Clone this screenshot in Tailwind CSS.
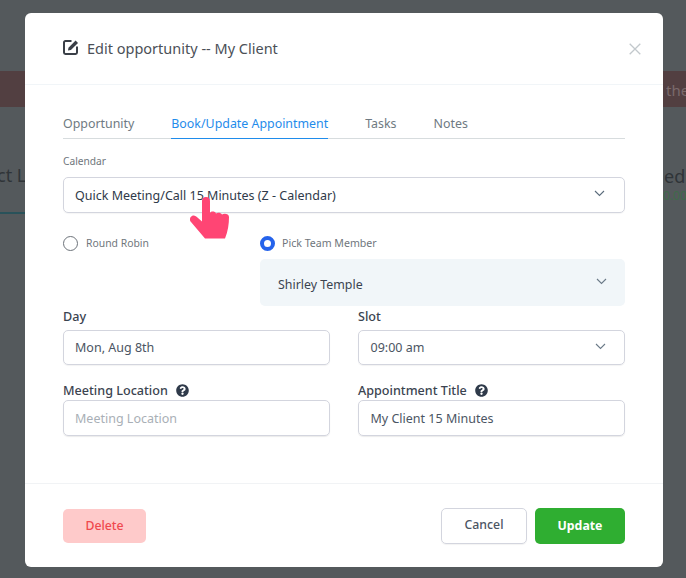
<!DOCTYPE html>
<html>
<head>
<meta charset="utf-8">
<script src="https://cdn.jsdelivr.net/npm/@tailwindcss/browser@4"></script>
</head>
<body class="m-0 p-0">
<div class="relative w-[686px] h-[578px] overflow-hidden bg-[#54595c] font-['Noto_Sans','Open_Sans',sans-serif]">
  <!-- page behind the overlay -->
  <div class="absolute left-0 top-[71px] w-full h-[36px] bg-[#523f41]"></div>
  <div class="absolute left-[-3px] top-[163px] text-[18px] leading-6 text-[#2f3438] whitespace-nowrap">ct L</div>
  <div class="absolute left-0 top-[212px] w-[25px] h-[2px] bg-[#29525a]"></div>
  <div class="absolute left-[663px] top-[80px] text-[15px] leading-5 text-[#7a6a6c] whitespace-nowrap pl-[3px]">the</div>
  <div class="absolute left-[663px] top-[164px] text-[18px] leading-6 text-[#2f3438] pl-px">ed</div>
  <div class="absolute left-[663px] top-[188px] text-[12px] leading-4 text-[#3f6b4a]">0.00</div>

  <!-- modal -->
  <div class="absolute left-[25px] top-[13px] w-[638px] h-[554px] bg-white rounded-[6px] flex flex-col">
    <div class="h-[72px] border-b border-[#f1f5f8] flex items-center justify-between pl-[38px] pr-[22px] shrink-0">
      <div class="flex items-center gap-[8px]">
        <svg class="w-[16px] h-[16px] mt-[-3px] text-[#3a3f47]" viewBox="0 0 16 16" fill="none">
          <path d="M8.500 2H2.400A1.400 1.400 0 0 0 1 3.400v10.200A1.400 1.400 0 0 0 2.400 15h10.200a1.400 1.400 0 0 0 1.400-1.400V7.600" stroke="currentColor" stroke-width="2"/>
          <path d="M5 11.600l.5-2.900L12.600 1.600l2.400 2.400-7.100 7.100z" fill="currentColor"/>
        </svg>
        <span class="text-[14.500px] leading-5 text-[#4b5057] mt-[-2px]">Edit opportunity -- My Client</span>
      </div>
      <svg class="w-[12px] h-[12px] text-[#c2c8cc]" viewBox="0 0 12 12" fill="none"><path d="M.7.7l10.600 10.600M11.300.7L.7 11.300" stroke="currentColor" stroke-width="1.300"/></svg>
    </div>

    <div class="flex-1 px-[38px] pt-[29px]">
      <div class="flex gap-[37px] border-b border-[#d7dcde] h-[25px] text-[12.400px] leading-5 text-[#6f7a82]">
        <span class="h-[25px]">Opportunity</span>
        <span class="h-[25px] text-[#1f8ceb] border-b border-[#1f8ceb]">Book/Update Appointment</span>
        <span class="h-[25px]">Tasks</span>
        <span class="h-[25px]">Notes</span>
      </div>

      <div class="mt-[15px] text-[10.200px] leading-[14px] text-[#6f767c]">Calendar</div>
      <div class="mt-[9px] relative h-[36px] border border-[#d3d5de] rounded-[5px] shadow-[0_1px_1px_rgba(0,0,0,0.04)] pl-[11px] pr-[19px] flex items-center justify-between">
        <span class="text-[12.500px] leading-5 text-[#2f3a4a] mt-[1px]">Quick Meeting/Call 15 Minutes (Z - Calendar)</span>
        <svg class="w-[11px] h-[7px] text-[#5a6b7b] mt-[-3px]" viewBox="0 0 11 7" fill="none"><path d="M1 1l4.500 4.500L10 1" stroke="currentColor" stroke-width="1.100"/></svg>
      </div>

      <div class="flex mt-[12px] h-[81px]">
        <div class="w-[197px] flex items-start gap-[8px] pt-[11px]">
          <span class="block w-[15px] h-[15px] rounded-full border-[1.300px] border-[#6d737a] bg-white"></span>
          <span class="text-[10.400px] leading-[15px] text-[#6f767c]">Round Robin</span>
        </div>
        <div class="flex-1 flex flex-col">
          <div class="flex items-start gap-[7px] pt-[11px] h-[34px] shrink-0">
            <span class="block w-[15px] h-[15px] rounded-full border-[4px] border-[#2563eb] bg-white"></span>
            <span class="text-[10.600px] leading-[15px] text-[#6f767c]">Pick Team Member</span>
          </div>
          <div class="h-[47px] shrink-0 bg-[#f1f6f9] rounded-[5px] pl-[18px] pr-[18px] flex items-center justify-between">
            <span class="text-[12.400px] leading-5 text-[#3b4450] mt-[5px]">Shirley Temple</span>
            <svg class="w-[11px] h-[7px] text-[#6b7a88] mt-[-3px]" viewBox="0 0 11 7" fill="none"><path d="M1 1l4.500 4.500L10 1" stroke="currentColor" stroke-width="1.100"/></svg>
          </div>
        </div>
      </div>

      <div class="grid grid-cols-2 gap-x-[28px]">
        <div>
          <div class="h-[24px] pt-[1px] text-[12.600px] leading-5 font-medium text-[#3b4450]">Day</div>
          <div class="h-[35px] pt-[2px] border border-[#d3d5de] rounded-[5px] shadow-[0_1px_1px_rgba(0,0,0,0.05)] pl-[11px] flex items-center text-[12.500px] text-[#4b5563]">Mon, Aug 8th</div>
        </div>
        <div>
          <div class="h-[24px] pt-[1px] text-[12.600px] leading-5 font-medium text-[#3b4450]">Slot</div>
          <div class="h-[35px] border border-[#d3d5de] rounded-[5px] shadow-[0_1px_1px_rgba(0,0,0,0.05)] pl-[11.500px] pr-[18px] flex items-center justify-between text-[12.500px] text-[#4b5563]">
            <span class="mt-[2px]">09:00 am</span>
            <svg class="w-[11px] h-[7px] text-[#6b7a88] mt-[-3px]" viewBox="0 0 11 7" fill="none"><path d="M1 1l4.500 4.500L10 1" stroke="currentColor" stroke-width="1.100"/></svg>
          </div>
        </div>
        <div class="mt-[15px]">
          <div class="h-[20px] pt-[1px] flex items-start gap-[8px] text-[12.600px] leading-5 font-medium text-[#3b4450]">
            <span>Meeting Location</span>
            <svg class="w-[13px] h-[13px] mt-[3px] text-[#2f3a4a]" viewBox="0 0 512 512" fill="currentColor"><path d="M504 256c0 137-111 248-248 248S8 393 8 256 119 8 256 8s248 111 248 248zM262.700 90c-54.500 0-89.300 23-116.600 63.800-3.500 5.300-2.400 12.400 2.700 16.300l34.700 26.300c5.200 3.900 12.600 3 16.700-2.100 17.900-22.700 30.100-35.800 57.300-35.800 20.400 0 45.700 13.100 45.700 33 0 15-12.400 22.700-32.600 34-23.600 13.200-54.800 29.700-54.800 70.800V300c0 6.600 5.400 12 12 12h56c6.600 0 12-5.400 12-12v-1.300c0-28.500 83.200-29.700 83.200-106.700 0-58-60.200-102-116.300-102zM256 338c-25.400 0-46 20.600-46 46s20.600 46 46 46 46-20.600 46-46-20.600-46-46-46z"/></svg>
          </div>
          <div class="h-[36px] pt-[2px] border border-[#d3d5de] rounded-[5px] shadow-[0_1px_1px_rgba(0,0,0,0.08)] pl-[11px] flex items-center text-[12.500px] text-[#a9afb6]">Meeting Location</div>
        </div>
        <div class="mt-[15px]">
          <div class="h-[20px] pt-[1px] flex items-start gap-[8px] text-[12.600px] leading-5 font-medium text-[#3b4450]">
            <span>Appointment Title</span>
            <svg class="w-[13px] h-[13px] mt-[3px] text-[#2f3a4a]" viewBox="0 0 512 512" fill="currentColor"><path d="M504 256c0 137-111 248-248 248S8 393 8 256 119 8 256 8s248 111 248 248zM262.700 90c-54.500 0-89.300 23-116.600 63.800-3.500 5.300-2.400 12.400 2.700 16.300l34.700 26.300c5.200 3.900 12.600 3 16.700-2.100 17.900-22.700 30.100-35.800 57.300-35.800 20.400 0 45.700 13.100 45.700 33 0 15-12.400 22.700-32.600 34-23.600 13.200-54.800 29.700-54.800 70.800V300c0 6.600 5.400 12 12 12h56c6.600 0 12-5.400 12-12v-1.300c0-28.500 83.200-29.700 83.200-106.700 0-58-60.200-102-116.300-102zM256 338c-25.400 0-46 20.600-46 46s20.600 46 46 46 46-20.600 46-46-20.600-46-46-46z"/></svg>
          </div>
          <div class="h-[36px] pt-[2px] border border-[#d3d5de] rounded-[5px] shadow-[0_1px_1px_rgba(0,0,0,0.08)] pl-[11.500px] flex items-center text-[12.500px] text-[#4b5563]">My Client 15 Minutes</div>
        </div>
      </div>
    </div>

    <div class="h-[84px] border-t border-[#f1f3f5] px-[38px] flex items-center justify-between shrink-0">
      <div class="w-[83px] h-[34px] pt-[1px] bg-[#fecaca] rounded-[5px] flex items-center justify-center text-[12.300px] font-medium text-[#f0484e]">Delete</div>
      <div class="flex gap-[8px] items-center">
        <div class="w-[86px] h-[36px] border border-[#d3d5de] rounded-[5px] shadow-[0_1px_1px_rgba(0,0,0,0.05)] flex items-center justify-center text-[12.300px] font-medium text-[#4b5563]">Cancel</div>
        <div class="w-[90px] h-[36px] pt-[1px] bg-[#2fae31] rounded-[5px] flex items-center justify-center text-[12.300px] font-bold text-white">Update</div>
      </div>
    </div>
  </div>

  <!-- pointer hand annotation -->
  <svg class="absolute left-[190px] top-[197px] w-[40px] h-[42px] text-[#ff4574]" viewBox="0 0 40 42" fill="currentColor">
    <path d="M12 4a4 4 0 0 1 8 0V16c1-2 5-2 6 .5c1.500-1.500 5-1 6 1c2-1.500 7-1 7 2.500c0 7-1 14-4 21.500H15L1 25c-2-2-1-5 1-6c2-1 4 0 6 2l4 3.500z"/>
  </svg>
</div>
</body>
</html>
